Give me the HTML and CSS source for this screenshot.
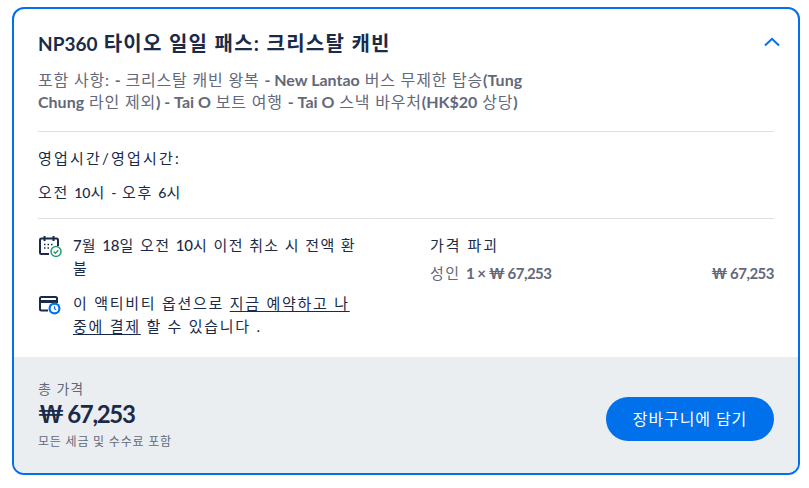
FILE: index.html
```html
<!DOCTYPE html>
<html lang="ko">
<head>
  <meta charset="UTF-8">
  <title>NP360 타이오 일일 패스</title>
  <link rel="stylesheet" href="styles.css">
</head>
<body>
  <div class="card">
    <div class="card-body">
      <div class="title-row">
        <h2 class="title"><span class="lat">NP360</span> 타이오 일일 패스: 크리스탈 캐빈</h2>
        <svg class="chevron" width="16" height="10" viewBox="0 0 16 10"><path d="M1 8.500 8 1.800l7 6.700" fill="none" stroke="#0071eb" stroke-width="2"/></svg>
      </div>
      <p class="desc">포함 사항: <span class="lat">-</span> 크리스탈 캐빈 왕복 <span class="lat">- New Lantao</span> 버스 무제한 탑승<span class="lat">(Tung Chung</span> 라인 제외<span class="lat">) - Tai O</span> 보트 여행 <span class="lat">- Tai O</span> 스낵 바우처<span class="lat">(HK$20</span> 상당<span class="lat">)</span></p>

      <div class="hours">
        <p>영업시간/영업시간:</p>
        <p>오전 <span class="lat">10</span>시 <span class="lat">-</span> 오후 <span class="lat">6</span>시</p>
      </div>

      <div class="info">
        <div class="policies">
          <div class="policy">
            <svg class="icon" width="24" height="24" viewBox="0 0 24 24">
              <path d="M3 4.500h15.500a1.500 1.500 0 0 1 1.500 1.500v6M11 20H3.500A1.500 1.500 0 0 1 2 18.500V6a1.500 1.500 0 0 1 1.500-1.500" fill="none" stroke="#1a2b49" stroke-width="2"/>
              <path d="M6.500 2v5M15.500 2v5" stroke="#1a2b49" stroke-width="2"/>
              <path d="M6 10.500h1.500M9.500 10.500H11M13 10.500h1.500M6 14h1.500M9.500 14H11" stroke="#1a2b49" stroke-width="1.500"/>
              <circle cx="18" cy="17.500" r="5" fill="#fff" stroke="#2a9d6f" stroke-width="1.500"/>
              <path d="m15.800 17.600 1.600 1.600 2.900-3" fill="none" stroke="#2a9d6f" stroke-width="1.500"/>
            </svg>
            <p class="refund"><span class="lat">7</span>월 <span class="lat">18</span>일 오전 <span class="lat">10</span>시 이전 취소 시 전액 환<br>불</p>
          </div>
          <div class="policy">
            <svg class="icon" width="24" height="24" viewBox="0 0 24 24">
              <path d="M10 18.500H3.500A1.500 1.500 0 0 1 2 17V6.500A1.500 1.500 0 0 1 3.500 5h14A1.500 1.500 0 0 1 19 6.500V11" fill="none" stroke="#1a2b49" stroke-width="2"/>
              <path d="M2 9.500h17" stroke="#1a2b49" stroke-width="3"/>
              <circle cx="16.500" cy="16.500" r="6" fill="#0071eb"/>
              <circle cx="16.500" cy="16.500" r="3.800" fill="#fff"/>
              <path d="M16.500 14.300v2.400l1.700 1" fill="none" stroke="#0071eb" stroke-width="1.200"/>
            </svg>
            <p>이 액티비티 옵션으로 <u>지금 예약하고 나중에 결제</u> 할 수 있습니다 .</p>
          </div>
        </div>
        <div class="breakdown">
          <div class="breakdown-title">가격 파괴</div>
          <div class="breakdown-row">
            <span>성인 <span class="lat">1 × ₩ 67,253</span></span>
            <span class="lat">₩ 67,253</span>
          </div>
        </div>
      </div>
    </div>

    <div class="footer">
      <div class="total">
        <div class="total-label">총 가격</div>
        <div class="total-price">₩ 67,253</div>
        <div class="total-note">모든 세금 및 수수료 포함</div>
      </div>
      <button class="cart-btn">장바구니에 담기</button>
    </div>
  </div>
</body>
</html>
```

FILE: styles.css
```css
* {
  box-sizing: border-box;
}

body {
  margin: 7px 9px 0 12px;
  background: #fff;
  color: #1a2b49;
  font-family: "Lato", "Noto Sans CJK KR", sans-serif;
}

p {
  margin: 0;
}

/* latin runs sit tighter and heavier than the korean around them */
.lat {
  letter-spacing: 0;
  font-weight: 500;
}

.card {
  height: 468px;
  border: 2px solid #0071eb;
  border-radius: 12px;
  overflow: hidden;
  display: flex;
  flex-direction: column;
}

.card-body {
  flex: 1;
  padding: 20px 24px 0;
}

.title-row {
  display: flex;
  justify-content: space-between;
  align-items: center;
}

.title {
  margin: 0;
  font-size: 20px;
  line-height: 28px;
  font-weight: 700;
  letter-spacing: 1.3px;
}

.title .lat {
  font-size: 19px;
  font-weight: 700;
}

.chevron {
  margin: 0 -6px 3px 0;
}

.desc {
  width: 500px;
  margin-top: 11px;
  font-size: 16px;
  line-height: 22px;
  letter-spacing: 0.8px;
  color: #63687a;
}

.desc .lat {
  font-size: 16px;
  font-weight: 700;
}

.hours {
  margin-top: 18px;
  padding: 15px 0 14px;
  border-top: 1px solid #dcdfe4;
  border-bottom: 1px solid #dcdfe4;
  font-size: 15px;
  line-height: 22px;
  letter-spacing: 2.2px;
}

.hours .lat {
  font-size: 14px;
}

.hours p + p {
  margin-top: 12px;
  letter-spacing: 1.6px;
}

.info {
  display: flex;
  padding-top: 15px;
}

.policies {
  width: 392px;
  display: flex;
  flex-direction: column;
  gap: 13px;
}

.policy {
  display: flex;
  gap: 11px;
}

.policy p {
  width: 289px;
  font-size: 15px;
  line-height: 22.5px;
  letter-spacing: 1.75px;
  word-break: break-all;
}

.policy p.refund {
  letter-spacing: 1.4px;
  white-space: nowrap;
}

.policy .lat {
  font-size: 15px;
}

.policy u {
  text-underline-offset: 2px;
}

.icon {
  flex-shrink: 0;
}

.breakdown {
  flex: 1;
}

.breakdown-title {
  font-size: 15px;
  line-height: 22px;
  letter-spacing: 2px;
}

.breakdown-row {
  display: flex;
  justify-content: space-between;
  margin-top: 6px;
  font-size: 15px;
  line-height: 22px;
  letter-spacing: 1.5px;
  color: #63687a;
}

.breakdown-row .lat {
  font-size: 15px;
  font-weight: 700;
  letter-spacing: -0.5px;
}

.footer {
  height: 116px;
  padding: 0 24px;
  background: #ebeef1;
  display: flex;
  justify-content: space-between;
  align-items: center;
}

.total-label {
  font-size: 14px;
  line-height: 20px;
  letter-spacing: 1px;
  color: #63687a;
}

.total-price {
  font-size: 24px;
  line-height: 29px;
  font-weight: 700;
  letter-spacing: -1.3px;
}

.total-note {
  margin-top: 5px;
  font-size: 12px;
  line-height: 18px;
  letter-spacing: 0.8px;
  color: #63687a;
}

.cart-btn {
  width: 168px;
  height: 44px;
  margin-top: 8px;
  padding: 0 0 2px;
  border: 0;
  border-radius: 22px;
  background: #0071eb;
  color: #fff;
  font-family: inherit;
  font-size: 16px;
  letter-spacing: 0.9px;
}
```
